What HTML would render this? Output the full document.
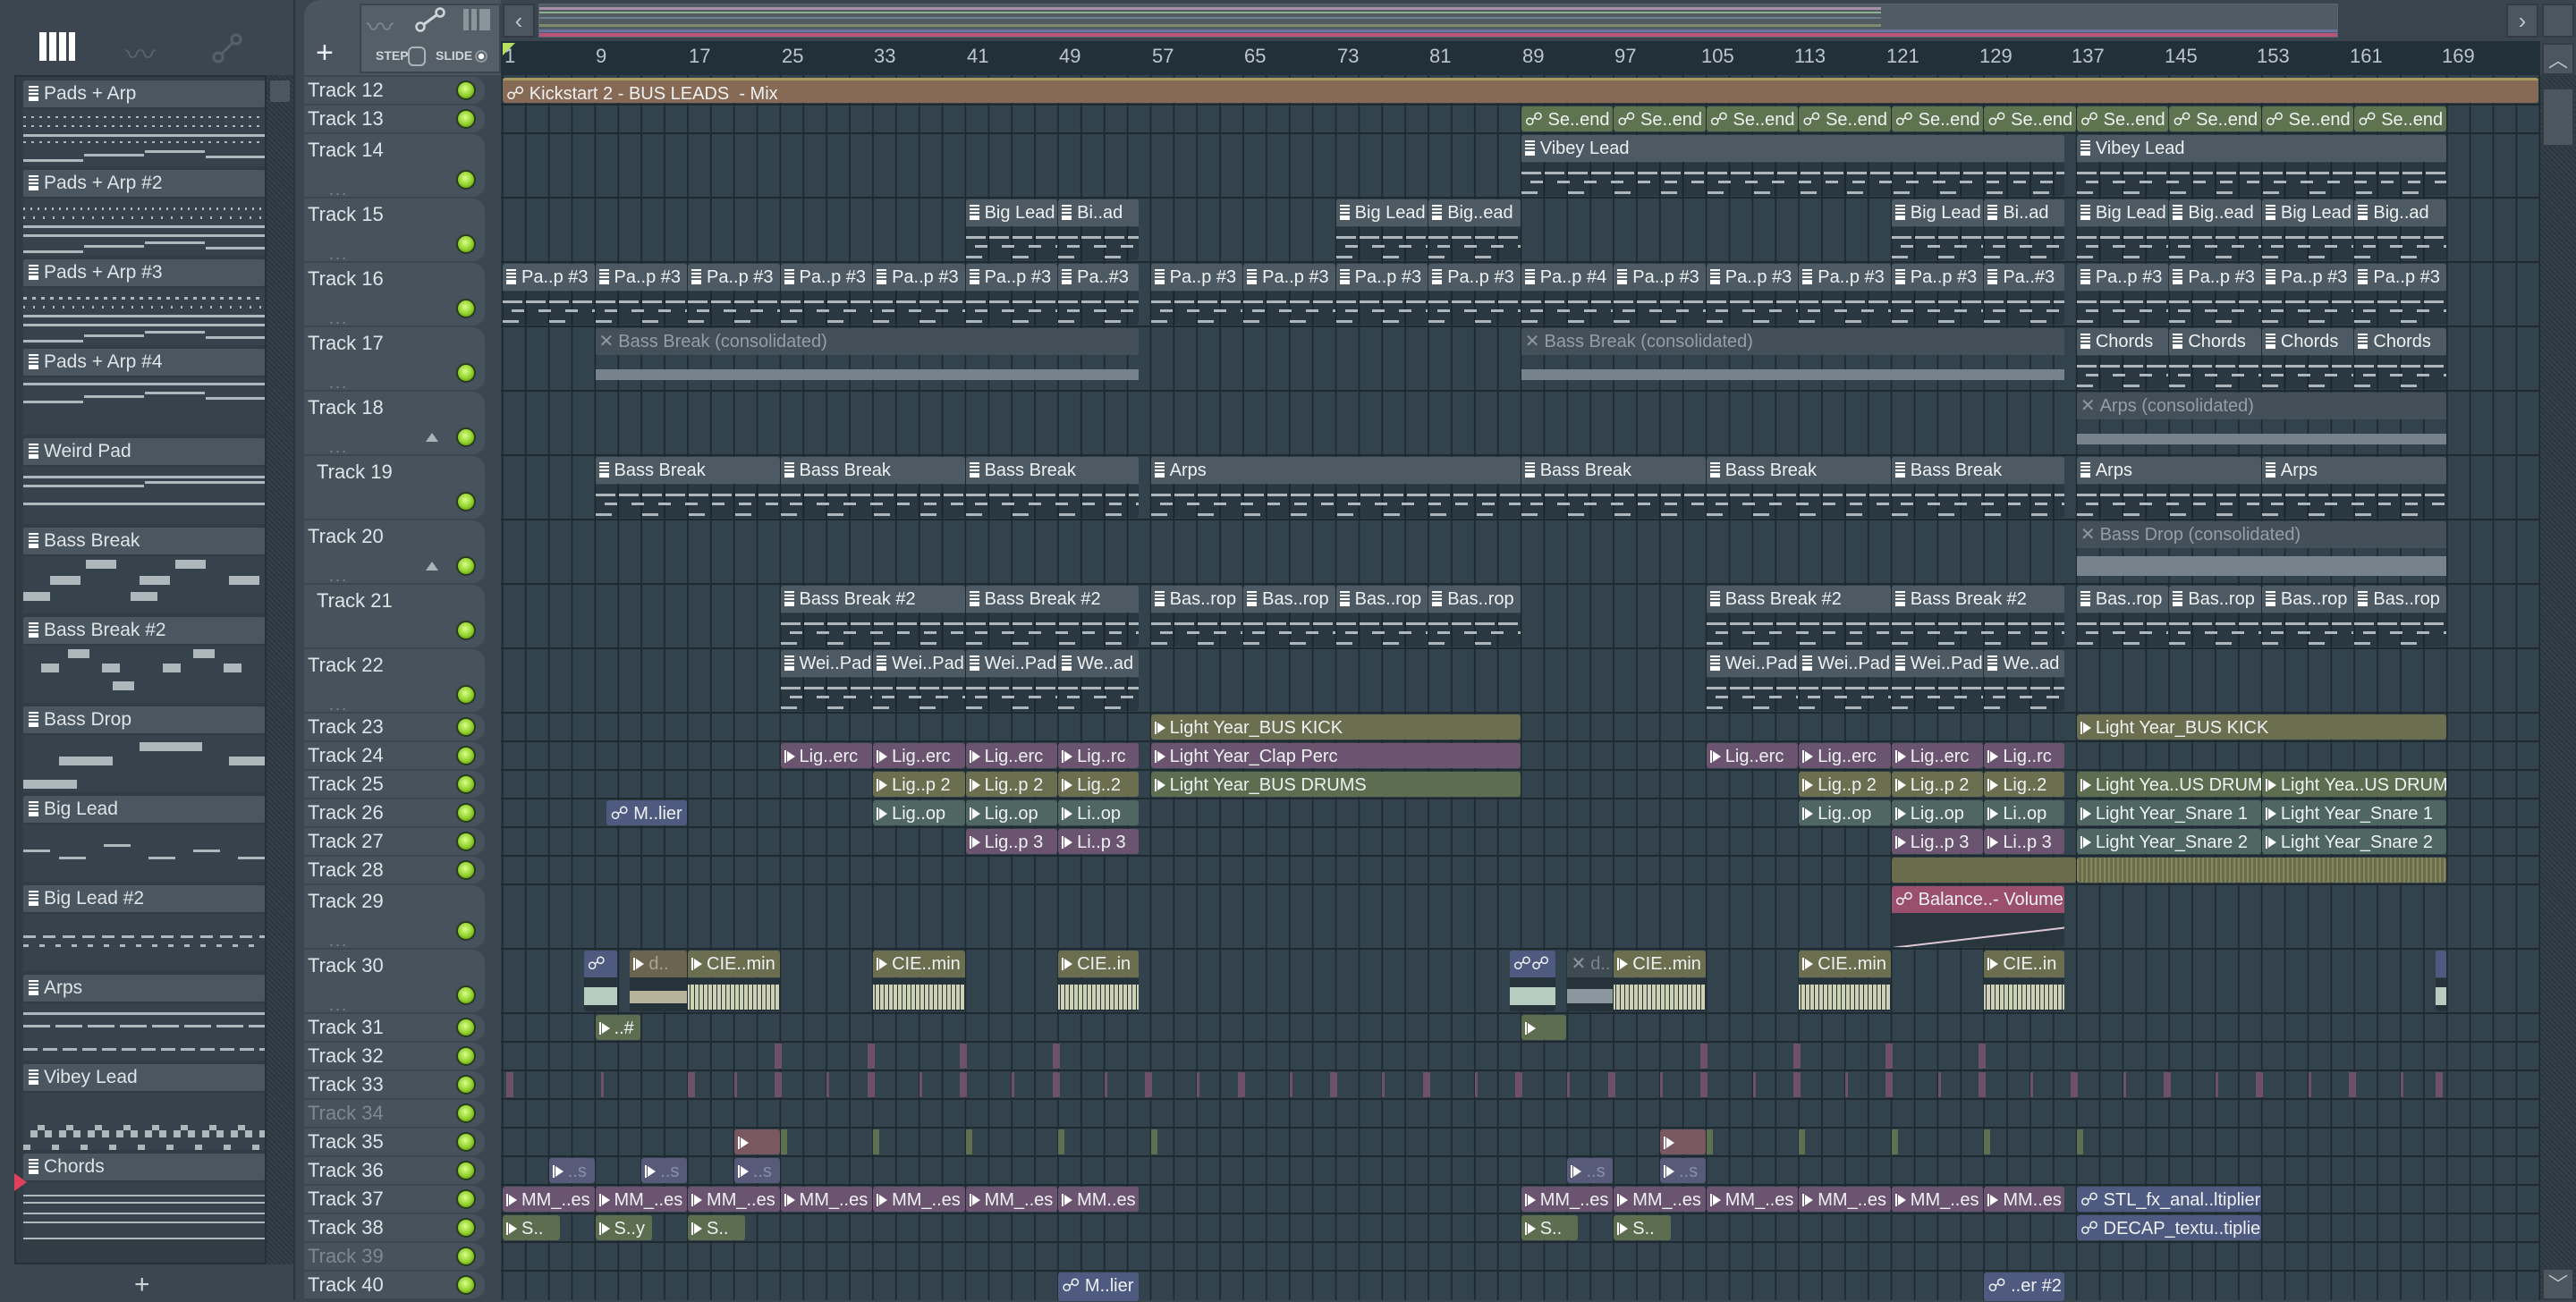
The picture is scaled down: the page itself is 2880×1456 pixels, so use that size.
<!DOCTYPE html>
<html><head><meta charset="utf-8"><style>
*{box-sizing:border-box;margin:0;padding:0}
body{width:2880px;height:1454px;overflow:hidden;background:#3a4650;font-family:"Liberation Sans",sans-serif;position:relative;color:#dfe4e7}
.abs{position:absolute}
#left{left:0;top:0;width:330px;height:1454px;background:#3b4650;border-right:2px solid #2a343b}
#lpanel{left:16px;top:84px;width:282px;height:1330px;background:#313c45;border:2px solid #273038}
#lscroll{left:298px;top:84px;width:30px;height:1330px;background:repeating-linear-gradient(45deg,#34404a 0 2px,#2c363e 2px 4px)}
.li{position:absolute;left:8px;width:270px;height:96px}
.li .lh{height:30px;background:#4a5660;border-radius:2px;font-size:21px;line-height:30px;padding-left:6px;white-space:nowrap}
.li .lb{height:64px;margin-top:2px;background:#37434c;position:relative;overflow:hidden}
.nl{position:absolute;height:3px;background:#aeb7bc}
.pi{display:inline-block;width:11px;height:17px;background:linear-gradient(#fff 0 2px,#5a6670 2px 4px,#fff 4px 6px,#5a6670 6px 8px,#fff 8px 10px,#5a6670 10px 12px,#fff 12px);margin-right:6px;vertical-align:-2px}
.ai{display:inline-block;width:12px;height:14px;margin-right:5px;vertical-align:-1px;background:linear-gradient(90deg,#fff 0 2px,transparent 2px);position:relative}
.ai::after{content:"";position:absolute;left:3px;top:1px;border-left:9px solid #fff;border-top:6px solid transparent;border-bottom:6px solid transparent}
.xi{display:inline-block;margin-right:5px;color:#8c979e}
#hdrs{left:340px;top:84px;width:205px;height:1370px}
.th{position:absolute;left:0;width:202px;background:#46525c;border-bottom:2px solid #3b464f;border-radius:0 14px 14px 0;font-size:22px;padding-left:4px}
.th .led{position:absolute;right:10px;width:22px;height:22px;border-radius:50%;background:radial-gradient(circle at 45% 40%,#d8ff8a,#8fd02a 55%,#4c7a12);border:2px solid #2a3a20}
.th .dots{position:absolute;left:28px;color:#7d878e;font-size:18px;letter-spacing:2px}
#grid{left:560px;top:84px;width:2280px;height:1370px;background-color:#33434d;background-image:repeating-linear-gradient(90deg,#1e2930 0 2px,transparent 2px 25.88px);background-position:1px 0}
.r{position:absolute;left:0;width:2280px;border-bottom:2px solid #1e2930}
.c{position:absolute;top:1px;bottom:1px;left:calc(2px + (var(--b) - 1)*12.94px);width:calc(var(--w)*12.94px - 1px);overflow:hidden;border-radius:3px}
.h{height:30px;line-height:30px;font-size:20px;color:#eef1f2;white-space:nowrap;padding-left:4px;overflow:hidden}
.sm .h{height:100%}
.p .h{background:#4d5a64}
.p .bd{position:absolute;top:31px;left:0;right:0;bottom:0;background-color:rgba(15,24,30,.25);background-image:repeating-linear-gradient(90deg,#aeb7bc 0 22px,transparent 22px 26px),repeating-linear-gradient(90deg,transparent 0 10px,#aeb7bc 10px 24px,transparent 24px 30px),repeating-linear-gradient(90deg,#aeb7bc 0 18px,transparent 18px 52px);background-size:100% 3px,100% 3px,100% 3px;background-position:0 10px,0 20px,0 32px;background-repeat:no-repeat}
.o{background:#876a55}
.g{background:#5e7450}
.ol{background:#6c6e50}
.pu{background:#6a5470}
.gr{background:#5c6d50}
.te{background:#4f6662}
.bl{background:#4e5a80}
.pk{background:#9a4f6c}
.au .h{background:#445059;color:#939ea5}
.au .bd{position:absolute;top:31px;left:0;right:0;bottom:0;background:linear-gradient(transparent 15px,#76838c 15px 27px,transparent 27px)}
.wv{position:absolute;top:31px;left:0;right:0;bottom:0;background:repeating-linear-gradient(90deg,transparent 0 2px,#26333b 2px 3px,transparent 3px 5px) ,linear-gradient(transparent 7px,#cfd1b4 7px 35px,transparent 35px);background-color:#26333b}
.tk{position:absolute;top:1px;bottom:1px;left:calc(2px + (var(--b) - 1)*12.94px);width:5px;background:#6e5068}
.ruler{left:560px;top:46px;width:2280px;height:38px;background:#22303a}
.rn{position:absolute;top:4px;font-size:22px;color:#bcc6cc}
</style></head><body>

<div id="left" class="abs">
 <div class="abs" style="left:44px;top:36px;width:40px;height:32px;background:linear-gradient(90deg,#fff 0 8px,#3b4650 8px 11px,#fff 11px 19px,#3b4650 19px 22px,#fff 22px 30px,#3b4650 30px 33px,#fff 33px)"></div>
 <div class="abs" style="left:140px;top:34px;width:40px;height:36px;color:#56626b;font-size:34px">〰</div>
 <svg class="abs" style="left:236px;top:36px" width="36" height="36"><path d="M8 28L28 8" stroke="#56626b" stroke-width="3"/><circle cx="8" cy="28" r="5" fill="#3b4650" stroke="#56626b" stroke-width="3"/><circle cx="28" cy="8" r="5" fill="#3b4650" stroke="#56626b" stroke-width="3"/></svg>
 <div id="lpanel" class="abs">
  <div class="li" style="top:4px"><div class="lh"><span class="pi"></span>Pads + Arp</div><div class="lb"><div class="nl" style="left:0;top:8px;width:270px;height:2px;background:repeating-linear-gradient(90deg,#aeb7bc 0 3px,transparent 3px 9px)"></div><div class="nl" style="left:0;top:18px;width:270px;height:2px;background:repeating-linear-gradient(90deg,#aeb7bc 0 3px,transparent 3px 9px)"></div><div class="nl" style="left:0;top:28px;width:270px"></div><div class="nl" style="left:0;top:36px;width:270px;height:2px;background:repeating-linear-gradient(90deg,#aeb7bc 0 3px,transparent 3px 9px)"></div><div class="nl" style="left:0;top:56px;width:67px"></div><div class="nl" style="left:68px;top:50px;width:67px"></div><div class="nl" style="left:136px;top:46px;width:67px"></div><div class="nl" style="left:204px;top:52px;width:66px"></div></div></div>
  <div class="li" style="top:104px"><div class="lh"><span class="pi"></span>Pads + Arp #2</div><div class="lb"><div class="nl" style="left:0;top:10px;width:270px;height:3px;background:repeating-linear-gradient(90deg,#aeb7bc 0 2px,transparent 2px 8px)"></div><div class="nl" style="left:0;top:20px;width:270px;height:3px;background:repeating-linear-gradient(90deg,#aeb7bc 0 2px,transparent 2px 11px)"></div><div class="nl" style="left:0;top:30px;width:270px"></div><div class="nl" style="left:0;top:40px;width:270px"></div><div class="nl" style="left:0;top:58px;width:67px"></div><div class="nl" style="left:68px;top:52px;width:67px"></div><div class="nl" style="left:136px;top:48px;width:67px"></div><div class="nl" style="left:204px;top:54px;width:66px"></div></div></div>
  <div class="li" style="top:204px"><div class="lh"><span class="pi"></span>Pads + Arp #3</div><div class="lb"><div class="nl" style="left:0;top:10px;width:270px;height:3px;background:repeating-linear-gradient(90deg,#aeb7bc 0 4px,transparent 4px 10px)"></div><div class="nl" style="left:0;top:20px;width:270px;height:3px;background:repeating-linear-gradient(90deg,#aeb7bc 0 2px,transparent 2px 11px)"></div><div class="nl" style="left:0;top:30px;width:270px"></div><div class="nl" style="left:0;top:40px;width:270px"></div><div class="nl" style="left:0;top:58px;width:67px"></div><div class="nl" style="left:68px;top:52px;width:67px"></div><div class="nl" style="left:136px;top:48px;width:67px"></div><div class="nl" style="left:204px;top:54px;width:66px"></div></div></div>
  <div class="li" style="top:304px"><div class="lh"><span class="pi"></span>Pads + Arp #4</div><div class="lb"><div class="nl" style="left:0;top:6px;width:270px"></div><div class="nl" style="left:0;top:26px;width:67px"></div><div class="nl" style="left:68px;top:20px;width:67px"></div><div class="nl" style="left:136px;top:16px;width:67px"></div><div class="nl" style="left:204px;top:22px;width:66px"></div></div></div>
  <div class="li" style="top:404px"><div class="lh"><span class="pi"></span>Weird Pad</div><div class="lb"><div class="nl" style="left:0;top:10px;width:270px"></div><div class="nl" style="left:0;top:20px;width:135px"></div><div class="nl" style="left:136px;top:16px;width:134px"></div><div class="nl" style="left:0;top:40px;width:270px"></div></div></div>
  <div class="li" style="top:504px"><div class="lh"><span class="pi"></span>Bass Break</div><div class="lb" style="background:#37434c repeating-linear-gradient(90deg,transparent 0 30px,#aeb7bc 30px 64px,transparent 64px 100px) 0 22px/100% 10px no-repeat"><div class="nl" style="left:70px;top:4px;width:34px;height:10px"></div><div class="nl" style="left:170px;top:4px;width:34px;height:10px"></div><div class="nl" style="left:0;top:40px;width:30px;height:10px"></div><div class="nl" style="left:120px;top:40px;width:30px;height:10px"></div></div></div>
  <div class="li" style="top:604px"><div class="lh"><span class="pi"></span>Bass Break #2</div><div class="lb" style="background:#37434c repeating-linear-gradient(90deg,transparent 0 20px,#aeb7bc 20px 40px,transparent 40px 68px) 0 20px/100% 10px no-repeat"><div class="nl" style="left:50px;top:4px;width:24px;height:10px"></div><div class="nl" style="left:190px;top:4px;width:24px;height:10px"></div><div class="nl" style="left:100px;top:40px;width:24px;height:10px"></div></div></div>
  <div class="li" style="top:704px"><div class="lh"><span class="pi"></span>Bass Drop</div><div class="lb"><div class="nl" style="left:130px;top:8px;width:70px;height:10px"></div><div class="nl" style="left:40px;top:24px;width:60px;height:10px"></div><div class="nl" style="left:230px;top:24px;width:40px;height:10px"></div><div class="nl" style="left:0;top:50px;width:60px;height:10px"></div></div></div>
  <div class="li" style="top:804px"><div class="lh"><span class="pi"></span>Big Lead</div><div class="lb"><div class="nl" style="left:0;top:28px;width:30px"></div><div class="nl" style="left:40px;top:36px;width:30px"></div><div class="nl" style="left:90px;top:22px;width:30px"></div><div class="nl" style="left:140px;top:36px;width:30px"></div><div class="nl" style="left:190px;top:28px;width:30px"></div><div class="nl" style="left:240px;top:36px;width:30px"></div></div></div>
  <div class="li" style="top:904px"><div class="lh"><span class="pi"></span>Big Lead #2</div><div class="lb"><div class="nl" style="left:0;top:24px;width:270px;height:3px;background:repeating-linear-gradient(90deg,#aeb7bc 0 14px,transparent 14px 22px)"></div><div class="nl" style="left:0;top:34px;width:270px;height:3px;background:repeating-linear-gradient(90deg,#aeb7bc 0 6px,transparent 6px 18px)"></div></div></div>
  <div class="li" style="top:1004px"><div class="lh"><span class="pi"></span>Arps</div><div class="lb"><div class="nl" style="left:0;top:10px;width:270px"></div><div class="nl" style="left:0;top:24px;width:270px;background:repeating-linear-gradient(90deg,#aeb7bc 0 30px,transparent 30px 36px)"></div><div class="nl" style="left:0;top:50px;width:270px;background:repeating-linear-gradient(90deg,#aeb7bc 0 16px,transparent 16px 22px)"></div></div></div>
  <div class="li" style="top:1104px"><div class="lh"><span class="pi"></span>Vibey Lead</div><div class="lb"><div class="nl" style="left:0;top:42px;width:270px;height:8px;background:repeating-linear-gradient(90deg,transparent 0 8px,#aeb7bc 8px 16px,transparent 16px 24px,#aeb7bc 24px 32px)"></div><div class="nl" style="left:0;top:36px;width:270px;height:6px;background:repeating-linear-gradient(90deg,transparent 0 16px,#aeb7bc 16px 24px,transparent 24px 32px)"></div><div class="nl" style="left:0;top:58px;width:270px;height:6px;background:repeating-linear-gradient(90deg,#aeb7bc 0 8px,transparent 8px 32px)"></div></div></div>
  <div class="li" style="top:1204px"><div class="lh"><span class="pi"></span>Chords</div><div class="lb"><div class="nl" style="left:0;top:14px;width:270px;height:2px"></div><div class="nl" style="left:0;top:22px;width:270px;height:2px"></div><div class="nl" style="left:0;top:34px;width:270px;height:2px"></div><div class="nl" style="left:0;top:44px;width:270px;height:2px"></div><div class="nl" style="left:0;top:62px;width:270px;height:2px"></div></div></div>
  <div class="abs" style="left:-2px;top:1226px;border-left:14px solid #e0405a;border-top:10px solid transparent;border-bottom:10px solid transparent"></div>
 </div>
 <div id="lscroll" class="abs"><div style="margin:6px 4px;width:22px;height:24px;background:#4a5660;border-radius:2px"></div></div>
 <div class="abs" style="left:150px;top:1420px;font-size:30px;color:#cdd3d6">+</div>
</div>

<div class="abs" style="left:340px;top:0;width:220px;height:84px;background:#4a555e;border-radius:18px 0 0 0"></div>
<div class="abs" style="left:353px;top:40px;font-size:34px;color:#eef">+</div>
<div class="abs" style="left:402px;top:4px;width:158px;height:78px;background:#555f68;border:2px solid #3b454d"></div>
<div class="abs" style="left:410px;top:6px;font-size:30px;color:#7d878e">〰</div>
<svg class="abs" style="left:464px;top:8px" width="34" height="28"><path d="M6 22L28 6" stroke="#cfd5d9" stroke-width="3"/><circle cx="6" cy="22" r="4.5" fill="#555f68" stroke="#cfd5d9" stroke-width="2.5"/><circle cx="28" cy="6" r="4.5" fill="#555f68" stroke="#cfd5d9" stroke-width="2.5"/></svg>
<div class="abs" style="left:518px;top:10px;width:30px;height:24px;background:linear-gradient(90deg,#8a949b 0 6px,#555f68 6px 9px,#8a949b 9px 15px,#555f68 15px 18px,#8a949b 18px)"></div>
<div class="abs" style="left:420px;top:54px;font-size:14px;color:#cfd5d9;font-weight:bold">STEP</div>
<div class="abs" style="left:456px;top:52px;width:20px;height:22px;border:2px solid #aab3b8;border-radius:6px"></div>
<div class="abs" style="left:487px;top:54px;font-size:14px;color:#cfd5d9;font-weight:bold">SLIDE</div>
<div class="abs" style="left:531px;top:56px;width:14px;height:14px;border:2px solid #8a949b;border-radius:50%;background:radial-gradient(#fff 0 3px,transparent 3.5px)"></div>
<div class="abs" style="left:560px;top:0;width:2320px;height:46px;background:#3a444c"></div>
<div class="abs" style="left:562px;top:4px;width:36px;height:38px;background:#4c565e;border:2px solid #333c43;color:#bcc4c9;font-size:26px;text-align:center;line-height:34px">‹</div>
<div class="abs" style="left:602px;top:4px;width:2012px;height:38px;background:#505b63;border:1px solid #5b666e;overflow:hidden">
 <div class="abs" style="left:0;top:3px;width:1500px;height:3px;background:#a78fa6"></div>
 <div class="abs" style="left:0;top:8px;width:1500px;height:2px;background:#8fb08a"></div>
 <div class="abs" style="left:0;top:14px;width:1500px;height:2px;background:#6f8090"></div>
 <div class="abs" style="left:0;top:22px;width:1500px;height:3px;background:#7e8a6a"></div>
 <div class="abs" style="left:0;top:28px;width:2010px;height:3px;background:#6a74a0"></div>
 <div class="abs" style="left:0;top:32px;width:2010px;height:4px;background:#b9547a"></div>
</div>
<div class="abs" style="left:2802px;top:4px;width:36px;height:38px;background:#4c565e;border:2px solid #333c43;color:#bcc4c9;font-size:26px;text-align:center;line-height:34px">›</div>
<div class="abs" style="left:2842px;top:4px;width:36px;height:38px;background:#4c565e;border:2px solid #333c43"></div>
<div class="abs ruler">
 <div class="abs" style="left:2px;top:2px;border-left:14px solid #b8e060;border-bottom:14px solid transparent"></div>
 <span class="rn" style="left:4px">1</span><span class="rn" style="left:106px">9</span><span class="rn" style="left:210px">17</span><span class="rn" style="left:314px">25</span><span class="rn" style="left:417px">33</span><span class="rn" style="left:521px">41</span><span class="rn" style="left:624px">49</span><span class="rn" style="left:728px">57</span><span class="rn" style="left:831px">65</span><span class="rn" style="left:935px">73</span><span class="rn" style="left:1038px">81</span><span class="rn" style="left:1142px">89</span><span class="rn" style="left:1245px">97</span><span class="rn" style="left:1342px">105</span><span class="rn" style="left:1446px">113</span><span class="rn" style="left:1549px">121</span><span class="rn" style="left:1653px">129</span><span class="rn" style="left:1756px">137</span><span class="rn" style="left:1860px">145</span><span class="rn" style="left:1963px">153</span><span class="rn" style="left:2067px">161</span><span class="rn" style="left:2170px">169</span>
</div>
<div class="abs" style="left:2842px;top:48px;width:36px;height:36px;background:#4c565e;border:2px solid #333c43;color:#bcc4c9;font-size:22px;text-align:center;line-height:36px">︿</div>
<div class="abs" style="left:2840px;top:84px;width:40px;height:1370px;background:repeating-linear-gradient(45deg,#34404a 0 2px,#2c363e 2px 4px)"></div>
<div class="abs" style="left:2842px;top:98px;width:36px;height:66px;background:#4c565e;border:2px solid #333c43"></div>
<div class="abs" style="left:2842px;top:1418px;width:36px;height:36px;background:#4c565e;border:2px solid #333c43;color:#bcc4c9;font-size:22px;text-align:center;line-height:34px">﹀</div>

<div id="hdrs" class="abs">
<div class="th" style="top:2px;height:32px;line-height:30px">Track 12<div class="led" style="top:4px"></div></div>
<div class="th" style="top:34px;height:32px;line-height:30px">Track 13<div class="led" style="top:4px"></div></div>
<div class="th" style="top:66px;height:72px;line-height:36px">Track 14<div class="dots" style="top:44px">...</div><div class="led" style="top:40px"></div></div>
<div class="th" style="top:138px;height:72px;line-height:36px">Track 15<div class="dots" style="top:44px">...</div><div class="led" style="top:40px"></div></div>
<div class="th" style="top:210px;height:72px;line-height:36px">Track 16<div class="dots" style="top:44px">...</div><div class="led" style="top:40px"></div></div>
<div class="th" style="top:282px;height:72px;line-height:36px">Track 17<div class="dots" style="top:44px">...</div><div class="led" style="top:40px"></div></div>
<div class="th" style="top:354px;height:72px;line-height:36px">Track 18<div class="dots" style="top:44px">...</div><div class="led" style="top:40px"></div><div class="abs" style="left:136px;top:46px;border-bottom:10px solid #aab3b8;border-left:7px solid transparent;border-right:7px solid transparent"></div></div>
<div class="th" style="top:426px;height:72px;line-height:36px;padding-left:14px">Track 19<div class="led" style="top:40px"></div></div>
<div class="th" style="top:498px;height:72px;line-height:36px">Track 20<div class="dots" style="top:44px">...</div><div class="led" style="top:40px"></div><div class="abs" style="left:136px;top:46px;border-bottom:10px solid #aab3b8;border-left:7px solid transparent;border-right:7px solid transparent"></div></div>
<div class="th" style="top:570px;height:72px;line-height:36px;padding-left:14px">Track 21<div class="led" style="top:40px"></div></div>
<div class="th" style="top:642px;height:72px;line-height:36px">Track 22<div class="dots" style="top:44px">...</div><div class="led" style="top:40px"></div></div>
<div class="th" style="top:714px;height:32px;line-height:30px">Track 23<div class="led" style="top:4px"></div></div>
<div class="th" style="top:746px;height:32px;line-height:30px">Track 24<div class="led" style="top:4px"></div></div>
<div class="th" style="top:778px;height:32px;line-height:30px">Track 25<div class="led" style="top:4px"></div></div>
<div class="th" style="top:810px;height:32px;line-height:30px">Track 26<div class="led" style="top:4px"></div></div>
<div class="th" style="top:842px;height:32px;line-height:30px">Track 27<div class="led" style="top:4px"></div></div>
<div class="th" style="top:874px;height:32px;line-height:30px">Track 28<div class="led" style="top:4px"></div></div>
<div class="th" style="top:906px;height:72px;line-height:36px">Track 29<div class="dots" style="top:44px">...</div><div class="led" style="top:40px"></div></div>
<div class="th" style="top:978px;height:72px;line-height:36px">Track 30<div class="dots" style="top:44px">...</div><div class="led" style="top:40px"></div></div>
<div class="th" style="top:1050px;height:32px;line-height:30px">Track 31<div class="led" style="top:4px"></div></div>
<div class="th" style="top:1082px;height:32px;line-height:30px">Track 32<div class="led" style="top:4px"></div></div>
<div class="th" style="top:1114px;height:32px;line-height:30px">Track 33<div class="led" style="top:4px"></div></div>
<div class="th" style="top:1146px;height:32px;line-height:30px;color:#7f898f">Track 34<div class="led" style="top:4px"></div></div>
<div class="th" style="top:1178px;height:32px;line-height:30px">Track 35<div class="led" style="top:4px"></div></div>
<div class="th" style="top:1210px;height:32px;line-height:30px">Track 36<div class="led" style="top:4px"></div></div>
<div class="th" style="top:1242px;height:32px;line-height:30px">Track 37<div class="led" style="top:4px"></div></div>
<div class="th" style="top:1274px;height:32px;line-height:30px">Track 38<div class="led" style="top:4px"></div></div>
<div class="th" style="top:1306px;height:32px;line-height:30px;color:#7f898f">Track 39<div class="led" style="top:4px"></div></div>
<div class="th" style="top:1338px;height:32px;line-height:30px">Track 40<div class="led" style="top:4px"></div></div>
</div>

<div id="grid" class="abs">
<div class="r" style="top:2px;height:32px"><div class="c o sm" style="--b:1;--w:176;border-top:3px solid #a89a60"><div class="h">☍ Kickstart 2 - BUS LEADS&nbsp; - Mix</div></div></div>
<div class="r" style="top:34px;height:32px">
<div class="c g sm" style="--b:89;--w:8"><div class="h">☍ Se..end</div></div><div class="c g sm" style="--b:97;--w:8"><div class="h">☍ Se..end</div></div><div class="c g sm" style="--b:105;--w:8"><div class="h">☍ Se..end</div></div><div class="c g sm" style="--b:113;--w:8"><div class="h">☍ Se..end</div></div><div class="c g sm" style="--b:121;--w:8"><div class="h">☍ Se..end</div></div><div class="c g sm" style="--b:129;--w:8"><div class="h">☍ Se..end</div></div><div class="c g sm" style="--b:137;--w:8"><div class="h">☍ Se..end</div></div><div class="c g sm" style="--b:145;--w:8"><div class="h">☍ Se..end</div></div><div class="c g sm" style="--b:153;--w:8"><div class="h">☍ Se..end</div></div><div class="c g sm" style="--b:161;--w:8"><div class="h">☍ Se..end</div></div>
</div>
<div class="r" style="top:66px;height:72px">
<div class="c p" style="--b:89;--w:47"><div class="h"><span class="pi"></span>Vibey Lead</div><div class="bd"></div></div>
<div class="c p" style="--b:137;--w:32"><div class="h"><span class="pi"></span>Vibey Lead</div><div class="bd"></div></div>
</div>
<div class="r" style="top:138px;height:72px">
<div class="c p" style="--b:41;--w:8"><div class="h"><span class="pi"></span>Big Lead</div><div class="bd"></div></div><div class="c p" style="--b:49;--w:7"><div class="h"><span class="pi"></span>Bi..ad</div><div class="bd"></div></div>
<div class="c p" style="--b:73;--w:8"><div class="h"><span class="pi"></span>Big Lead</div><div class="bd"></div></div><div class="c p" style="--b:81;--w:8"><div class="h"><span class="pi"></span>Big..ead</div><div class="bd"></div></div>
<div class="c p" style="--b:121;--w:8"><div class="h"><span class="pi"></span>Big Lead</div><div class="bd"></div></div><div class="c p" style="--b:129;--w:7"><div class="h"><span class="pi"></span>Bi..ad</div><div class="bd"></div></div>
<div class="c p" style="--b:137;--w:8"><div class="h"><span class="pi"></span>Big Lead</div><div class="bd"></div></div><div class="c p" style="--b:145;--w:8"><div class="h"><span class="pi"></span>Big..ead</div><div class="bd"></div></div><div class="c p" style="--b:153;--w:8"><div class="h"><span class="pi"></span>Big Lead</div><div class="bd"></div></div><div class="c p" style="--b:161;--w:8"><div class="h"><span class="pi"></span>Big..ad</div><div class="bd"></div></div>
</div>
<div class="r" style="top:210px;height:72px">
<div class="c p" style="--b:1;--w:8"><div class="h"><span class="pi"></span>Pa..p #3</div><div class="bd"></div></div><div class="c p" style="--b:9;--w:8"><div class="h"><span class="pi"></span>Pa..p #3</div><div class="bd"></div></div><div class="c p" style="--b:17;--w:8"><div class="h"><span class="pi"></span>Pa..p #3</div><div class="bd"></div></div><div class="c p" style="--b:25;--w:8"><div class="h"><span class="pi"></span>Pa..p #3</div><div class="bd"></div></div><div class="c p" style="--b:33;--w:8"><div class="h"><span class="pi"></span>Pa..p #3</div><div class="bd"></div></div><div class="c p" style="--b:41;--w:8"><div class="h"><span class="pi"></span>Pa..p #3</div><div class="bd"></div></div><div class="c p" style="--b:49;--w:7"><div class="h"><span class="pi"></span>Pa..#3</div><div class="bd"></div></div>
<div class="c p" style="--b:57;--w:8"><div class="h"><span class="pi"></span>Pa..p #3</div><div class="bd"></div></div><div class="c p" style="--b:65;--w:8"><div class="h"><span class="pi"></span>Pa..p #3</div><div class="bd"></div></div><div class="c p" style="--b:73;--w:8"><div class="h"><span class="pi"></span>Pa..p #3</div><div class="bd"></div></div><div class="c p" style="--b:81;--w:8"><div class="h"><span class="pi"></span>Pa..p #3</div><div class="bd"></div></div>
<div class="c p" style="--b:89;--w:8"><div class="h"><span class="pi"></span>Pa..p #4</div><div class="bd"></div></div><div class="c p" style="--b:97;--w:8"><div class="h"><span class="pi"></span>Pa..p #3</div><div class="bd"></div></div><div class="c p" style="--b:105;--w:8"><div class="h"><span class="pi"></span>Pa..p #3</div><div class="bd"></div></div><div class="c p" style="--b:113;--w:8"><div class="h"><span class="pi"></span>Pa..p #3</div><div class="bd"></div></div><div class="c p" style="--b:121;--w:8"><div class="h"><span class="pi"></span>Pa..p #3</div><div class="bd"></div></div><div class="c p" style="--b:129;--w:7"><div class="h"><span class="pi"></span>Pa..#3</div><div class="bd"></div></div>
<div class="c p" style="--b:137;--w:8"><div class="h"><span class="pi"></span>Pa..p #3</div><div class="bd"></div></div><div class="c p" style="--b:145;--w:8"><div class="h"><span class="pi"></span>Pa..p #3</div><div class="bd"></div></div><div class="c p" style="--b:153;--w:8"><div class="h"><span class="pi"></span>Pa..p #3</div><div class="bd"></div></div><div class="c p" style="--b:161;--w:8"><div class="h"><span class="pi"></span>Pa..p #3</div><div class="bd"></div></div>
</div>
<div class="r" style="top:282px;height:72px">
<div class="c au" style="--b:9;--w:47"><div class="h"><span class="xi">✕</span>Bass Break (consolidated)</div><div class="bd"></div></div>
<div class="c au" style="--b:89;--w:47"><div class="h"><span class="xi">✕</span>Bass Break (consolidated)</div><div class="bd"></div></div>
<div class="c p" style="--b:137;--w:8"><div class="h"><span class="pi"></span>Chords</div><div class="bd"></div></div><div class="c p" style="--b:145;--w:8"><div class="h"><span class="pi"></span>Chords</div><div class="bd"></div></div><div class="c p" style="--b:153;--w:8"><div class="h"><span class="pi"></span>Chords</div><div class="bd"></div></div><div class="c p" style="--b:161;--w:8"><div class="h"><span class="pi"></span>Chords</div><div class="bd"></div></div>
</div>
<div class="r" style="top:354px;height:72px"><div class="c au" style="--b:137;--w:32"><div class="h"><span class="xi">✕</span>Arps (consolidated)</div><div class="bd"></div></div></div>
<div class="r" style="top:426px;height:72px">
<div class="c p" style="--b:9;--w:16"><div class="h"><span class="pi"></span>Bass Break</div><div class="bd"></div></div><div class="c p" style="--b:25;--w:16"><div class="h"><span class="pi"></span>Bass Break</div><div class="bd"></div></div><div class="c p" style="--b:41;--w:15"><div class="h"><span class="pi"></span>Bass Break</div><div class="bd"></div></div>
<div class="c p" style="--b:57;--w:32"><div class="h"><span class="pi"></span>Arps</div><div class="bd"></div></div>
<div class="c p" style="--b:89;--w:16"><div class="h"><span class="pi"></span>Bass Break</div><div class="bd"></div></div><div class="c p" style="--b:105;--w:16"><div class="h"><span class="pi"></span>Bass Break</div><div class="bd"></div></div><div class="c p" style="--b:121;--w:15"><div class="h"><span class="pi"></span>Bass Break</div><div class="bd"></div></div>
<div class="c p" style="--b:137;--w:16"><div class="h"><span class="pi"></span>Arps</div><div class="bd"></div></div><div class="c p" style="--b:153;--w:16"><div class="h"><span class="pi"></span>Arps</div><div class="bd"></div></div>
</div>
<div class="r" style="top:498px;height:72px"><div class="c au" style="--b:137;--w:32"><div class="h"><span class="xi">✕</span>Bass Drop (consolidated)</div><div class="bd" style="background:linear-gradient(transparent 8px,#76838c 8px 30px,transparent 30px)"></div></div></div>
<div class="r" style="top:570px;height:72px">
<div class="c p" style="--b:25;--w:16"><div class="h"><span class="pi"></span>Bass Break #2</div><div class="bd"></div></div><div class="c p" style="--b:41;--w:15"><div class="h"><span class="pi"></span>Bass Break #2</div><div class="bd"></div></div>
<div class="c p" style="--b:57;--w:8"><div class="h"><span class="pi"></span>Bas..rop</div><div class="bd"></div></div><div class="c p" style="--b:65;--w:8"><div class="h"><span class="pi"></span>Bas..rop</div><div class="bd"></div></div><div class="c p" style="--b:73;--w:8"><div class="h"><span class="pi"></span>Bas..rop</div><div class="bd"></div></div><div class="c p" style="--b:81;--w:8"><div class="h"><span class="pi"></span>Bas..rop</div><div class="bd"></div></div>
<div class="c p" style="--b:105;--w:16"><div class="h"><span class="pi"></span>Bass Break #2</div><div class="bd"></div></div><div class="c p" style="--b:121;--w:15"><div class="h"><span class="pi"></span>Bass Break #2</div><div class="bd"></div></div>
<div class="c p" style="--b:137;--w:8"><div class="h"><span class="pi"></span>Bas..rop</div><div class="bd"></div></div><div class="c p" style="--b:145;--w:8"><div class="h"><span class="pi"></span>Bas..rop</div><div class="bd"></div></div><div class="c p" style="--b:153;--w:8"><div class="h"><span class="pi"></span>Bas..rop</div><div class="bd"></div></div><div class="c p" style="--b:161;--w:8"><div class="h"><span class="pi"></span>Bas..rop</div><div class="bd"></div></div>
</div>
<div class="r" style="top:642px;height:72px">
<div class="c p" style="--b:25;--w:8"><div class="h"><span class="pi"></span>Wei..Pad</div><div class="bd"></div></div><div class="c p" style="--b:33;--w:8"><div class="h"><span class="pi"></span>Wei..Pad</div><div class="bd"></div></div><div class="c p" style="--b:41;--w:8"><div class="h"><span class="pi"></span>Wei..Pad</div><div class="bd"></div></div><div class="c p" style="--b:49;--w:7"><div class="h"><span class="pi"></span>We..ad</div><div class="bd"></div></div>
<div class="c p" style="--b:105;--w:8"><div class="h"><span class="pi"></span>Wei..Pad</div><div class="bd"></div></div><div class="c p" style="--b:113;--w:8"><div class="h"><span class="pi"></span>Wei..Pad</div><div class="bd"></div></div><div class="c p" style="--b:121;--w:8"><div class="h"><span class="pi"></span>Wei..Pad</div><div class="bd"></div></div><div class="c p" style="--b:129;--w:7"><div class="h"><span class="pi"></span>We..ad</div><div class="bd"></div></div>
</div>
<div class="r" style="top:714px;height:32px"><div class="c ol sm" style="--b:57;--w:32"><div class="h"><span class="ai"></span>Light Year_BUS KICK</div></div><div class="c ol sm" style="--b:137;--w:32"><div class="h"><span class="ai"></span>Light Year_BUS KICK</div></div></div>
<div class="r" style="top:746px;height:32px">
<div class="c pu sm" style="--b:25;--w:8"><div class="h"><span class="ai"></span>Lig..erc</div></div><div class="c pu sm" style="--b:33;--w:8"><div class="h"><span class="ai"></span>Lig..erc</div></div><div class="c pu sm" style="--b:41;--w:8"><div class="h"><span class="ai"></span>Lig..erc</div></div><div class="c pu sm" style="--b:49;--w:7"><div class="h"><span class="ai"></span>Lig..rc</div></div>
<div class="c pu sm" style="--b:57;--w:32"><div class="h"><span class="ai"></span>Light Year_Clap Perc</div></div>
<div class="c pu sm" style="--b:105;--w:8"><div class="h"><span class="ai"></span>Lig..erc</div></div><div class="c pu sm" style="--b:113;--w:8"><div class="h"><span class="ai"></span>Lig..erc</div></div><div class="c pu sm" style="--b:121;--w:8"><div class="h"><span class="ai"></span>Lig..erc</div></div><div class="c pu sm" style="--b:129;--w:7"><div class="h"><span class="ai"></span>Lig..rc</div></div>
</div>
<div class="r" style="top:778px;height:32px">
<div class="c ol sm" style="--b:33;--w:8"><div class="h"><span class="ai"></span>Lig..p 2</div></div><div class="c ol sm" style="--b:41;--w:8"><div class="h"><span class="ai"></span>Lig..p 2</div></div><div class="c ol sm" style="--b:49;--w:7"><div class="h"><span class="ai"></span>Lig..2</div></div>
<div class="c gr sm" style="--b:57;--w:32"><div class="h"><span class="ai"></span>Light Year_BUS DRUMS</div></div>
<div class="c ol sm" style="--b:113;--w:8"><div class="h"><span class="ai"></span>Lig..p 2</div></div><div class="c ol sm" style="--b:121;--w:8"><div class="h"><span class="ai"></span>Lig..p 2</div></div><div class="c ol sm" style="--b:129;--w:7"><div class="h"><span class="ai"></span>Lig..2</div></div>
<div class="c gr sm" style="--b:137;--w:16"><div class="h"><span class="ai"></span>Light Yea..US DRUMS</div></div><div class="c gr sm" style="--b:153;--w:16"><div class="h"><span class="ai"></span>Light Yea..US DRUMS</div></div>
</div>
<div class="r" style="top:810px;height:32px">
<div class="c bl sm" style="--b:10;--w:7"><div class="h">☍ M..lier</div></div>
<div class="c te sm" style="--b:33;--w:8"><div class="h"><span class="ai"></span>Lig..op</div></div><div class="c te sm" style="--b:41;--w:8"><div class="h"><span class="ai"></span>Lig..op</div></div><div class="c te sm" style="--b:49;--w:7"><div class="h"><span class="ai"></span>Li..op</div></div>
<div class="c te sm" style="--b:113;--w:8"><div class="h"><span class="ai"></span>Lig..op</div></div><div class="c te sm" style="--b:121;--w:8"><div class="h"><span class="ai"></span>Lig..op</div></div><div class="c te sm" style="--b:129;--w:7"><div class="h"><span class="ai"></span>Li..op</div></div>
<div class="c te sm" style="--b:137;--w:16"><div class="h"><span class="ai"></span>Light Year_Snare 1</div></div><div class="c te sm" style="--b:153;--w:16"><div class="h"><span class="ai"></span>Light Year_Snare 1</div></div>
</div>
<div class="r" style="top:842px;height:32px">
<div class="c pu sm" style="--b:41;--w:8"><div class="h"><span class="ai"></span>Lig..p 3</div></div><div class="c pu sm" style="--b:49;--w:7"><div class="h"><span class="ai"></span>Li..p 3</div></div>
<div class="c pu sm" style="--b:121;--w:8"><div class="h"><span class="ai"></span>Lig..p 3</div></div><div class="c pu sm" style="--b:129;--w:7"><div class="h"><span class="ai"></span>Li..p 3</div></div>
<div class="c te sm" style="--b:137;--w:16"><div class="h"><span class="ai"></span>Light Year_Snare 2</div></div><div class="c te sm" style="--b:153;--w:16"><div class="h"><span class="ai"></span>Light Year_Snare 2</div></div>
</div>
<div class="r" style="top:874px;height:32px">
<div class="c ol sm" style="--b:121;--w:16;background:#6a6c4c"></div>
<div class="c ol sm" style="--b:137;--w:32;background:#6a6c4c repeating-linear-gradient(90deg,#85885e 0 2px,transparent 2px 5px)"></div>
</div>
<div class="r" style="top:906px;height:72px">
<div class="c" style="--b:121;--w:15;background:#2a363e"><div class="h pk">☍ Balance..- Volume</div><svg class="abs" style="left:0;top:31px" width="206" height="40"><path d="M0 38L206 14" stroke="#e0c8d6" stroke-width="2" fill="none"/></svg></div>
</div>
<div class="r" style="top:978px;height:72px">
<div class="c" style="--b:8;--w:3;background:#26333b"><div class="h bl">☍</div><div class="wv" style="background:linear-gradient(transparent 10px,#b8ccc0 10px 30px,transparent 30px);background-color:#26333b"></div></div>
<div class="c" style="--b:12;--w:5;background:#26333b"><div class="h" style="background:#6a6450;color:#a8a690"><span class="ai"></span>d..</div><div class="wv" style="background:linear-gradient(transparent 14px,#b8b49c 14px 28px,transparent 28px);background-color:#26333b"></div></div>
<div class="c" style="--b:17;--w:8"><div class="h ol"><span class="ai"></span>CIE..min</div><div class="wv"></div></div>
<div class="c" style="--b:33;--w:8"><div class="h ol"><span class="ai"></span>CIE..min</div><div class="wv"></div></div>
<div class="c" style="--b:49;--w:7"><div class="h ol"><span class="ai"></span>CIE..in</div><div class="wv"></div></div>
<div class="c" style="--b:88;--w:4;background:#26333b"><div class="h bl">☍☍</div><div class="wv" style="background:linear-gradient(transparent 10px,#b8ccc0 10px 30px,transparent 30px);background-color:#26333b"></div></div>
<div class="c" style="--b:93;--w:4;background:#26333b"><div class="h" style="background:#3e4a52;color:#7a858c"><span class="xi">✕</span>d..</div><div class="wv" style="background:linear-gradient(transparent 12px,#8a979e 12px 28px,transparent 28px);background-color:#26333b"></div></div>
<div class="c" style="--b:97;--w:8"><div class="h ol"><span class="ai"></span>CIE..min</div><div class="wv"></div></div>
<div class="c" style="--b:113;--w:8"><div class="h ol"><span class="ai"></span>CIE..min</div><div class="wv"></div></div>
<div class="c" style="--b:129;--w:7"><div class="h ol"><span class="ai"></span>CIE..in</div><div class="wv"></div></div>
<div class="c" style="--b:168;--w:1"><div class="h bl"></div><div class="wv" style="background:linear-gradient(transparent 10px,#b8ccc0 10px 30px,transparent 30px);background-color:#26333b"></div></div>
</div>
<div class="r" style="top:1050px;height:32px"><div class="c gr sm" style="--b:9;--w:4"><div class="h"><span class="ai"></span>..#</div></div><div class="c gr sm" style="--b:89;--w:4"><div class="h"><span class="ai"></span></div></div></div>
<div class="r" style="top:1082px;height:32px">
<div class="tk" style="--b:24.5;width:8px"></div><div class="tk" style="--b:32.5;width:8px"></div><div class="tk" style="--b:40.5;width:8px"></div><div class="tk" style="--b:48.5;width:8px"></div><div class="tk" style="--b:104.5;width:8px"></div><div class="tk" style="--b:112.5;width:8px"></div><div class="tk" style="--b:120.5;width:8px"></div><div class="tk" style="--b:128.5;width:8px"></div>
</div>
<div class="r" style="top:1114px;height:32px">
<div class="tk" style="--b:1.3;width:8px"></div><div class="tk" style="--b:9.5;width:3px"></div><div class="tk" style="--b:17;width:8px"></div><div class="tk" style="--b:21;width:3px"></div><div class="tk" style="--b:24.5;width:8px"></div><div class="tk" style="--b:29;width:3px"></div><div class="tk" style="--b:32.5;width:8px"></div><div class="tk" style="--b:37;width:3px"></div><div class="tk" style="--b:40.5;width:8px"></div><div class="tk" style="--b:45;width:3px"></div><div class="tk" style="--b:48.5;width:8px"></div><div class="tk" style="--b:53;width:3px"></div><div class="tk" style="--b:56.5;width:8px"></div><div class="tk" style="--b:61;width:3px"></div><div class="tk" style="--b:64.5;width:8px"></div><div class="tk" style="--b:69;width:3px"></div><div class="tk" style="--b:72.5;width:8px"></div><div class="tk" style="--b:77;width:3px"></div><div class="tk" style="--b:80.5;width:8px"></div><div class="tk" style="--b:85;width:3px"></div><div class="tk" style="--b:88.5;width:8px"></div><div class="tk" style="--b:93;width:3px"></div><div class="tk" style="--b:96.5;width:8px"></div><div class="tk" style="--b:101;width:3px"></div><div class="tk" style="--b:104.5;width:8px"></div><div class="tk" style="--b:109;width:3px"></div><div class="tk" style="--b:112.5;width:8px"></div><div class="tk" style="--b:117;width:3px"></div><div class="tk" style="--b:120.5;width:8px"></div><div class="tk" style="--b:125;width:3px"></div><div class="tk" style="--b:128.5;width:8px"></div><div class="tk" style="--b:133;width:3px"></div><div class="tk" style="--b:136.5;width:8px"></div><div class="tk" style="--b:141;width:3px"></div><div class="tk" style="--b:144.5;width:8px"></div><div class="tk" style="--b:149;width:3px"></div><div class="tk" style="--b:152.5;width:8px"></div><div class="tk" style="--b:157;width:3px"></div><div class="tk" style="--b:160.5;width:8px"></div><div class="tk" style="--b:165;width:3px"></div><div class="tk" style="--b:168;width:8px"></div>
</div>
<div class="r" style="top:1146px;height:32px"></div>
<div class="r" style="top:1178px;height:32px">
<div class="c sm" style="--b:21;--w:4;background:#7a5862"><div class="h"><span class="ai"></span></div></div><div class="tk" style="--b:25;width:7px;background:#5e7050"></div><div class="tk" style="--b:33;width:7px;background:#5e7050"></div><div class="tk" style="--b:41;width:7px;background:#5e7050"></div><div class="tk" style="--b:49;width:7px;background:#5e7050"></div><div class="tk" style="--b:57;width:7px;background:#5e7050"></div>
<div class="c sm" style="--b:101;--w:4;background:#7a5862"><div class="h"><span class="ai"></span></div></div><div class="tk" style="--b:105;width:7px;background:#5e7050"></div><div class="tk" style="--b:113;width:7px;background:#5e7050"></div><div class="tk" style="--b:121;width:7px;background:#5e7050"></div><div class="tk" style="--b:129;width:7px;background:#5e7050"></div><div class="tk" style="--b:137;width:7px;background:#5e7050"></div>
</div>
<div class="r" style="top:1210px;height:32px">
<div class="c sm" style="--b:5;--w:4;background:#575a78"><div class="h" style="color:#8a90a8"><span class="ai"></span>..s</div></div><div class="c sm" style="--b:13;--w:4;background:#575a78"><div class="h" style="color:#8a90a8"><span class="ai"></span>..s</div></div><div class="c sm" style="--b:21;--w:4;background:#575a78"><div class="h" style="color:#8a90a8"><span class="ai"></span>..s</div></div>
<div class="c sm" style="--b:93;--w:4;background:#575a78"><div class="h" style="color:#8a90a8"><span class="ai"></span>..s</div></div><div class="c sm" style="--b:101;--w:4;background:#575a78"><div class="h" style="color:#8a90a8"><span class="ai"></span>..s</div></div>
</div>
<div class="r" style="top:1242px;height:32px">
<div class="c pu sm" style="--b:1;--w:8"><div class="h"><span class="ai"></span>MM_..es</div></div><div class="c pu sm" style="--b:9;--w:8"><div class="h"><span class="ai"></span>MM_..es</div></div><div class="c pu sm" style="--b:17;--w:8"><div class="h"><span class="ai"></span>MM_..es</div></div><div class="c pu sm" style="--b:25;--w:8"><div class="h"><span class="ai"></span>MM_..es</div></div><div class="c pu sm" style="--b:33;--w:8"><div class="h"><span class="ai"></span>MM_..es</div></div><div class="c pu sm" style="--b:41;--w:8"><div class="h"><span class="ai"></span>MM_..es</div></div><div class="c pu sm" style="--b:49;--w:7"><div class="h"><span class="ai"></span>MM..es</div></div>
<div class="c pu sm" style="--b:89;--w:8"><div class="h"><span class="ai"></span>MM_..es</div></div><div class="c pu sm" style="--b:97;--w:8"><div class="h"><span class="ai"></span>MM_..es</div></div><div class="c pu sm" style="--b:105;--w:8"><div class="h"><span class="ai"></span>MM_..es</div></div><div class="c pu sm" style="--b:113;--w:8"><div class="h"><span class="ai"></span>MM_..es</div></div><div class="c pu sm" style="--b:121;--w:8"><div class="h"><span class="ai"></span>MM_..es</div></div><div class="c pu sm" style="--b:129;--w:7"><div class="h"><span class="ai"></span>MM..es</div></div>
<div class="c bl sm" style="--b:137;--w:16"><div class="h">☍ STL_fx_anal..ltiplier</div></div>
</div>
<div class="r" style="top:1274px;height:32px">
<div class="c gr sm" style="--b:1;--w:5"><div class="h"><span class="ai"></span>S..</div></div><div class="c gr sm" style="--b:9;--w:5"><div class="h"><span class="ai"></span>S..y</div></div><div class="c gr sm" style="--b:17;--w:5"><div class="h"><span class="ai"></span>S..</div></div>
<div class="c gr sm" style="--b:89;--w:5"><div class="h"><span class="ai"></span>S..</div></div><div class="c gr sm" style="--b:97;--w:5"><div class="h"><span class="ai"></span>S..</div></div>
<div class="c bl sm" style="--b:137;--w:16"><div class="h">☍ DECAP_textu..tiplier</div></div>
</div>
<div class="r" style="top:1306px;height:32px"></div>
<div class="r" style="top:1338px;height:34px;border:none">
<div class="c bl sm" style="--b:49;--w:7"><div class="h">☍ M..lier</div></div><div class="c bl sm" style="--b:129;--w:7"><div class="h">☍ ..er #2</div></div>
</div>
</div>
</body></html>
